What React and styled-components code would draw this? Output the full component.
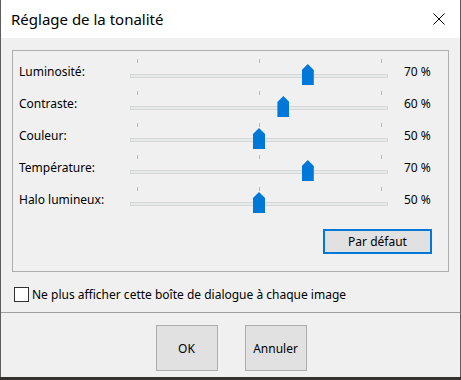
import React from 'react'
import styled, { createGlobalStyle } from 'styled-components'

const GlobalStyle = createGlobalStyle`
  html, body {
    margin: 0;
    padding: 0;
    background: #34322e;
  }
  body {
    font-family: "Noto Sans", "Liberation Sans", sans-serif;
    font-size: 12px;
    color: #000;
  }
`

const Window = styled.div`
  width: 459px;
  height: 377px;
  border-left: 1px solid #5c5c5c;
  border-right: 1px solid #5c5c5c;
  background: #f0f0f0;
  display: flex;
  flex-direction: column;
`

const TitleBar = styled.div`
  height: 38px;
  background: #fff;
  display: flex;
  align-items: center;
  justify-content: space-between;
  padding: 0 15px 0 10px;
`

const Title = styled.div`
  font-size: 15px;
  margin-top: -1px;
`

const Close = styled.div`
  width: 12px;
  height: 12px;
  display: flex;
`

const Content = styled.div`
  padding: 12px 11px 0 11px;
`

const GroupBox = styled.div`
  height: 216px;
  border: 1px solid #adadad;
  padding: 4px 16px 0 6px;
  display: flex;
  flex-direction: column;
`

const Row = styled.div`
  height: 32px;
  display: grid;
  grid-template-columns: 111px 258px 1fr;
  align-items: center;
`

const Label = styled.div`
  white-space: nowrap;
`

const Value = styled.div`
  padding-left: 16px;
  white-space: nowrap;
`

const Slider = styled.div`
  position: relative;
  height: 32px;
`

const Track = styled.div`
  position: absolute;
  left: 0;
  right: 0;
  top: 19px;
  height: 2px;
  background: #e7eaea;
  border: 1px solid #d6d6d6;
`

const Tick = styled.div`
  position: absolute;
  top: 4px;
  width: 1px;
  height: 4px;
  background: #b8b8b8;
  left: ${p => p.$at}px;
`

const Thumb = styled.div`
  position: absolute;
  top: 9px;
  width: 12px;
  height: 21px;
  margin-left: -6px;
  background: #0078d7;
  clip-path: polygon(50% 0, 100% 28%, 100% 100%, 0 100%, 0 28%);
`

const Footer = styled.div`
  display: flex;
  justify-content: flex-end;
  margin-top: 14px;
`

const DefaultButton = styled.button`
  width: 109px;
  height: 25px;
  background: #e1e1e1;
  border: 2px solid #0078d7;
  font: inherit;
  color: #000;
  padding: 0;
`

const CheckRow = styled.label`
  display: flex;
  align-items: center;
  gap: 3px;
  margin-top: 14px;
  padding-left: 2px;
  height: 16px;
`

const Box = styled.span`
  width: 13px;
  height: 13px;
  border: 1px solid #333;
  background: #fff;
`

const Separator = styled.div`
  margin-top: 10px;
  height: 1px;
  background: #a0a0a0;
`

const ButtonBar = styled.div`
  display: flex;
  justify-content: center;
  gap: 27px;
  padding-top: 12px;
  padding-left: 1px;
`

const DialogButton = styled.button`
  width: 62px;
  height: 46px;
  background: #e1e1e1;
  border: 1px solid #adadad;
  font: inherit;
  color: #000;
  padding: 0;
`

const SLIDER_W = 258
const TICK_L = 7
const TICK_R = 251

const rows = [
  { label: 'Luminosité:', value: 70 },
  { label: 'Contraste:', value: 60 },
  { label: 'Couleur:', value: 50 },
  { label: 'Température:', value: 70 },
  { label: 'Halo lumineux:', value: 50 },
]

const ToneSlider = ({ value }) => {
  const x = TICK_L + ((TICK_R - TICK_L) * value) / 100
  return (
    <Slider>
      <Tick $at={TICK_L} />
      <Tick $at={(TICK_L + TICK_R) / 2} />
      <Tick $at={TICK_R} />
      <Track />
      <Thumb style={{ left: x }} />
    </Slider>
  )
}

const App = () => (
  <>
    <GlobalStyle />
    <Window>
      <TitleBar>
        <Title>Réglage de la tonalité</Title>
        <Close>
          <svg width="12" height="12" viewBox="0 0 12 12">
            <path d="M0.5 0.5L11.5 11.5M11.5 0.5L0.5 11.5" stroke="#000" strokeWidth="1" />
          </svg>
        </Close>
      </TitleBar>
      <Content>
        <GroupBox>
          {rows.map(r => (
            <Row key={r.label}>
              <Label>{r.label}</Label>
              <ToneSlider value={r.value} />
              <Value>{r.value} %</Value>
            </Row>
          ))}
          <Footer>
            <DefaultButton>Par défaut</DefaultButton>
          </Footer>
        </GroupBox>
        <CheckRow>
          <Box />
          <span>Ne plus afficher cette boîte de dialogue à chaque image</span>
        </CheckRow>
      </Content>
      <Separator />
      <ButtonBar>
        <DialogButton>OK</DialogButton>
        <DialogButton>Annuler</DialogButton>
      </ButtonBar>
    </Window>
  </>
)

export default App
